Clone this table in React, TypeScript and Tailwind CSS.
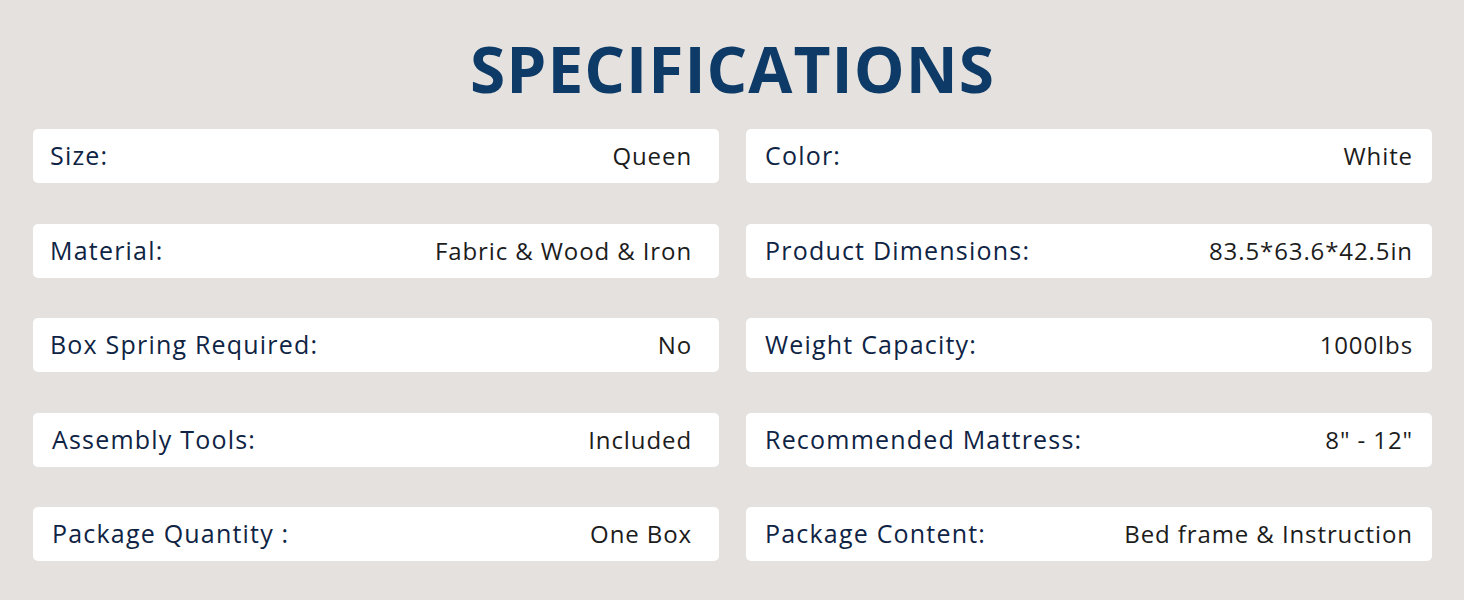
const SPECS: [string, string, string, string][] = [
  ['Size:', 'Queen', 'Color:', 'White'],
  ['Material:', 'Fabric & Wood & Iron', 'Product Dimensions:', '83.5*63.6*42.5in'],
  ['Box Spring Required:', 'No', 'Weight Capacity:', '1000lbs'],
  ['Assembly Tools:', 'Included', 'Recommended Mattress:', '8" - 12"'],
  ['Package Quantity :', 'One Box', 'Package Content:', 'Bed frame & Instruction'],
]

function Card({ label, value, right, indent }: { label: string; value: string; right?: boolean; indent?: boolean }) {
  return (
    <div
      className={`flex h-[54px] items-center justify-between rounded-[5px] bg-white ${
        right ? 'pl-[19px] pr-[19px]' : indent ? 'pl-[19px] pr-[27px]' : 'pl-[17px] pr-[27px]'
      }`}
    >
      <span className="text-[25px] tracking-[1.2px] text-[#0f2444]">{label}</span>
      <span className="text-[24px] tracking-[0.9px] text-[#1c1c1c]">{value}</span>
    </div>
  )
}

export default function App() {
  return (
    <div
      className="h-[600px] w-full overflow-hidden bg-[#e4e1de] pl-[33px] pr-[32px]"
      style={{ fontFamily: '"Open Sans", "Noto Sans", Arial, sans-serif' }}
    >
      <div className="flex h-[129px] items-center justify-center pt-[8px]">
        <h1 className="text-[64px] font-bold leading-none tracking-[1px] text-[#0d3a66]">
          SPECIFICATIONS
        </h1>
      </div>
      <div className="grid grid-cols-2 gap-x-[27px] gap-y-[40.5px]">
        {SPECS.map(([l1, v1, l2, v2], i) => (
          <div key={l1} className="contents">
            <Card label={l1} value={v1} indent={i >= 3} />
            <Card label={l2} value={v2} right />
          </div>
        ))}
      </div>
    </div>
  )
}
